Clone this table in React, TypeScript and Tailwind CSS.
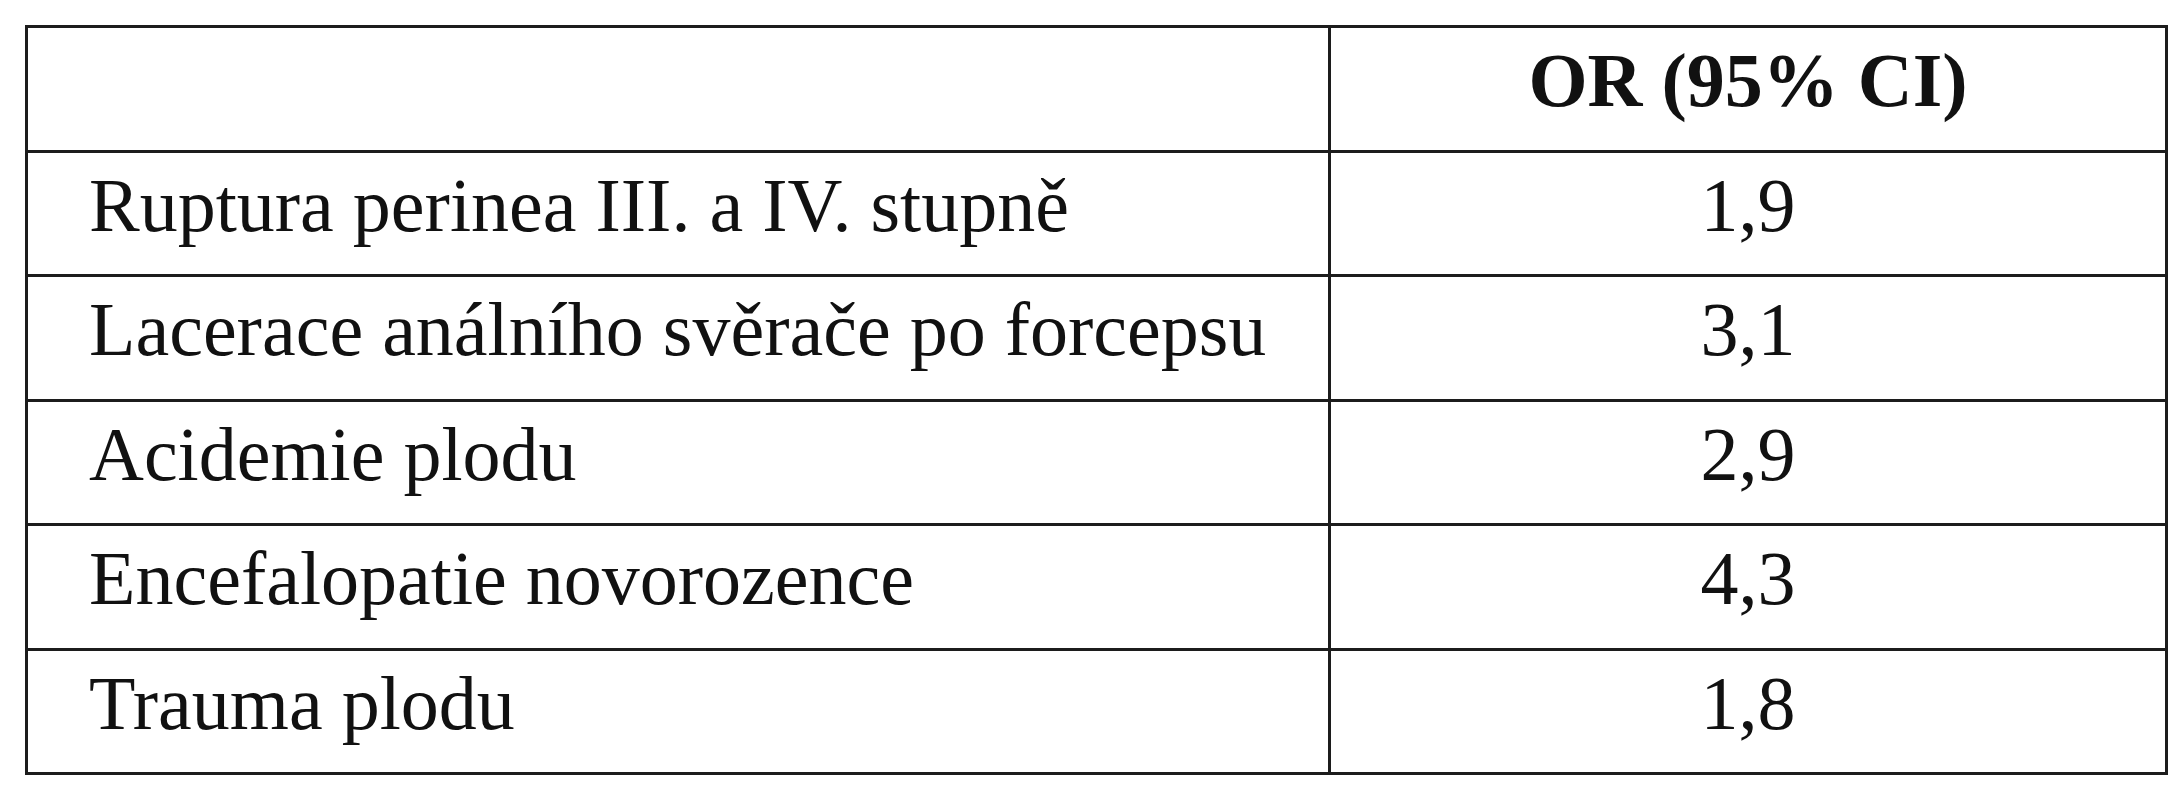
import React from "react";

const rows: [string, string][] = [
  ["Ruptura perinea III. a IV. stupně", "1,9"],
  ["Lacerace análního svěrače po forcepsu", "3,1"],
  ["Acidemie plodu", "2,9"],
  ["Encefalopatie novorozence", "4,3"],
  ["Trauma plodu", "1,8"],
];

export default function App() {
  return (
    <div className="w-[2181px] h-[800px] bg-white overflow-hidden">
      <div
        className="ml-[25px] mt-[25px] w-[2143px] border-[3px] border-[#1c1c1c] text-[#111] text-[76px] leading-[76px]"
        style={{ fontFamily: '"Liberation Serif", "Times New Roman", serif' }}
      >
        <div className="grid grid-cols-[1300px_1fr] h-[124.5px] border-b-[3px] border-[#1c1c1c]">
          <div />
          <div className="border-l-[3px] border-[#1c1c1c] text-center font-bold pt-[14px]">
            OR (95% CI)
          </div>
        </div>
        {rows.map(([label, value], i) => (
          <div
            key={label}
            className={
              i < rows.length - 1
                ? "grid grid-cols-[1300px_1fr] h-[124.5px] border-b-[3px] border-[#1c1c1c]"
                : "grid grid-cols-[1300px_1fr] h-[121.5px]"
            }
          >
            <div className="pl-[61px] pt-[14px] whitespace-nowrap">{label}</div>
            <div className="border-l-[3px] border-[#1c1c1c] text-center pt-[14px]">{value}</div>
          </div>
        ))}
      </div>
    </div>
  );
}
